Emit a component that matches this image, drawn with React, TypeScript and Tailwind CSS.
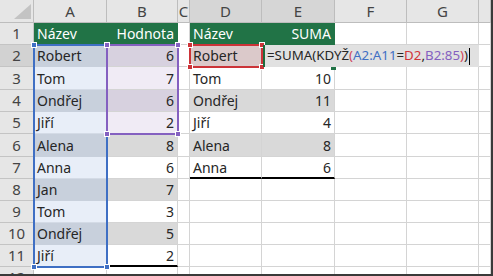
import clsx from 'clsx'

const letters = ['A', 'B', 'C', 'D', 'E', 'F', 'G', 'H']

const names = ['Robert', 'Tom', 'Ondřej', 'Jiří', 'Alena', 'Anna', 'Jan', 'Tom', 'Ondřej', 'Jiří']
const values = [6, 7, 6, 2, 8, 6, 7, 3, 5, 2]
const sums: [string, string][] = [
  ['Robert', ''],
  ['Tom', '10'],
  ['Ondřej', '11'],
  ['Jiří', '4'],
  ['Alena', '8'],
  ['Anna', '6'],
]

type CellSpec = { text?: string; right?: boolean; bg: string; line: string; extra?: string }

function spec(row: number, col: number): CellSpec {
  const shaded = row % 2 === 0

  // header row of both tables
  if (row === 1 && (col === 1 || col === 2 || col === 4 || col === 5)) {
    const text = col === 1 || col === 4 ? 'Název' : col === 2 ? 'Hodnota' : 'SUMA'
    return { text, right: col === 2 || col === 5, bg: 'bg-[#217346]', line: 'border-[#217346]', extra: 'text-white text-[14.5px]' }
  }

  // left table A2:B11
  if (row >= 2 && row <= 11 && col === 1) {
    return { text: names[row - 2], bg: shaded ? 'bg-[#c8d0dc]' : 'bg-[#e8eef8]', line: shaded ? 'border-[#c8d0dc]' : 'border-[#d4dbe6]' }
  }
  if (row >= 2 && row <= 11 && col === 2) {
    const tinted = row <= 5
    const bg = tinted ? (shaded ? 'bg-[#d7d1df]' : 'bg-[#f0ebf5]') : shaded ? 'bg-[#d9d9d9]' : 'bg-white'
    return {
      text: String(values[row - 2]),
      right: true,
      bg,
      line: 'border-[#d4d4d4]',
      extra: row === 11 ? 'border-b-2 border-b-black' : undefined,
    }
  }

  // right table D2:E7
  if (row >= 2 && row <= 7 && (col === 4 || col === 5)) {
    const [name, sum] = sums[row - 2]
    const bg = row === 2 && col === 4 ? 'bg-[#dbc9ca]' : shaded ? 'bg-[#d9d9d9]' : 'bg-white'
    return {
      text: col === 4 ? name : sum,
      right: col === 5,
      bg,
      line: 'border-[#d4d4d4]',
      extra: row === 7 ? 'border-b-2 border-b-black' : undefined,
    }
  }

  return { bg: 'bg-white', line: 'border-[#d4d4d4]' }
}

// coloured outline drawn over a referenced range, with its corner handles
function RangeBox({ className, handle, corners = 'tl tr bl br' }: { className: string; handle: string; corners?: string }) {
  const h = 'absolute h-[6px] w-[6px] border border-white'
  return (
    <div className={clsx('absolute border-2', className)}>
      {corners.includes('tl') && <div className={clsx(h, handle, '-top-[4px] -left-[4px]')} />}
      {corners.includes('tr') && <div className={clsx(h, handle, '-top-[4px] -right-[4px]')} />}
      {corners.includes('bl') && <div className={clsx(h, handle, '-bottom-[4px] -left-[4px]')} />}
      {corners.includes('br') && <div className={clsx(h, handle, '-right-[4px] -bottom-[4px]')} />}
    </div>
  )
}

export default function App() {
  const rows = Array.from({ length: 12 }, (_, i) => i + 1)

  return (
    <div
      className="relative h-[276px] w-[493px] overflow-hidden border-r-2 border-b-2 border-[#3a3a3a] bg-white"
      style={{ fontFamily: '"Noto Sans", "DejaVu Sans", sans-serif' }}
    >
      <div className="grid grid-cols-[34px_73px_71px_12px_72px_73px_72px_72px_12px] grid-rows-[23px_22px_22px_23px_22px_22px_23px_22px_22px_22px_22px_22px_22px]">
        {/* select-all corner */}
        <div className="flex items-end justify-end border-r border-b border-[#bdbdbd] bg-[#e6e6e6] pr-[2px] pb-[3px]">
          <svg width="17" height="15" viewBox="0 0 17 15">
            <polygon points="17,0 17,15 0,15" fill="#c3c3c3" />
          </svg>
        </div>
        {letters.map((l) => (
          <div
            key={l}
            className={clsx(
              'flex items-center justify-center border-r border-b border-[#bdbdbd] text-[15px] text-[#444]',
              l === 'D' || l === 'E' ? 'bg-[#d6d6d6]' : 'bg-[#e6e6e6]'
            )}
          >
            {l !== 'H' && l}
          </div>
        ))}

        {rows.map((r) => (
          <div key={r} className="contents">
            <div
              className={clsx(
                'flex items-center justify-center border-r border-b border-[#c4c4c4] text-[15px] text-[#444]',
                r === 2 ? 'bg-[#d2d2d2]' : 'bg-[#e6e6e6]'
              )}
            >
              {r}
            </div>
            {letters.map((_, ci) => {
              const s = spec(r, ci + 1)
              return (
                <div
                  key={ci}
                  className={clsx(
                    'flex items-center overflow-hidden whitespace-nowrap border-r border-b px-[3px] text-[14px] text-[#262626]',
                    s.right ? 'justify-end' : 'justify-start',
                    s.bg,
                    s.line,
                    s.extra
                  )}
                >
                  {s.text}
                </div>
              )
            })}
          </div>
        ))}
      </div>

      {/* reference ranges highlighted while the formula is edited */}
      <RangeBox className="top-[44px] left-[33px] h-[224px] w-[75px] border-[#3f6fc4]" handle="bg-[#3f6fc4]" corners="tl bl br" />
      <RangeBox className="top-[44px] left-[106px] h-[91px] w-[73px] border-[#8460c0]" handle="bg-[#8460c0]" />
      <RangeBox className="top-[44px] left-[189px] h-[24px] w-[74px] border-[#cc3338]" handle="bg-[#cc3338]" />

      {/* formula being edited in E2, spilling over F2:G2 */}
      <div className="absolute top-[45px] left-[263px] h-[24px] w-[216px]">
        <div className="flex h-[22px] items-center border-l-2 border-[#1d6b3c] bg-[#e1e1e1] pl-[2px] text-[13.3px] whitespace-nowrap text-[#262626]">
          <span>=SUMA(KDYŽ</span>
          <span className="text-[#d0455a]">(</span>
          <span className="text-[#3f6fc4]">A2:A11</span>
          <span>=</span>
          <span className="text-[#d13438]">D2</span>
          <span>,</span>
          <span className="text-[#8460c0]">B2:85</span>
          <span className="text-[#d0455a]">)</span>
          <span>)</span>
          <span className="ml-[1px] h-[17px] w-[1px] bg-black" />
        </div>
        <div className="ml-[68px] h-[3px] w-[5px] bg-[#217346]" />
      </div>
    </div>
  )
}
